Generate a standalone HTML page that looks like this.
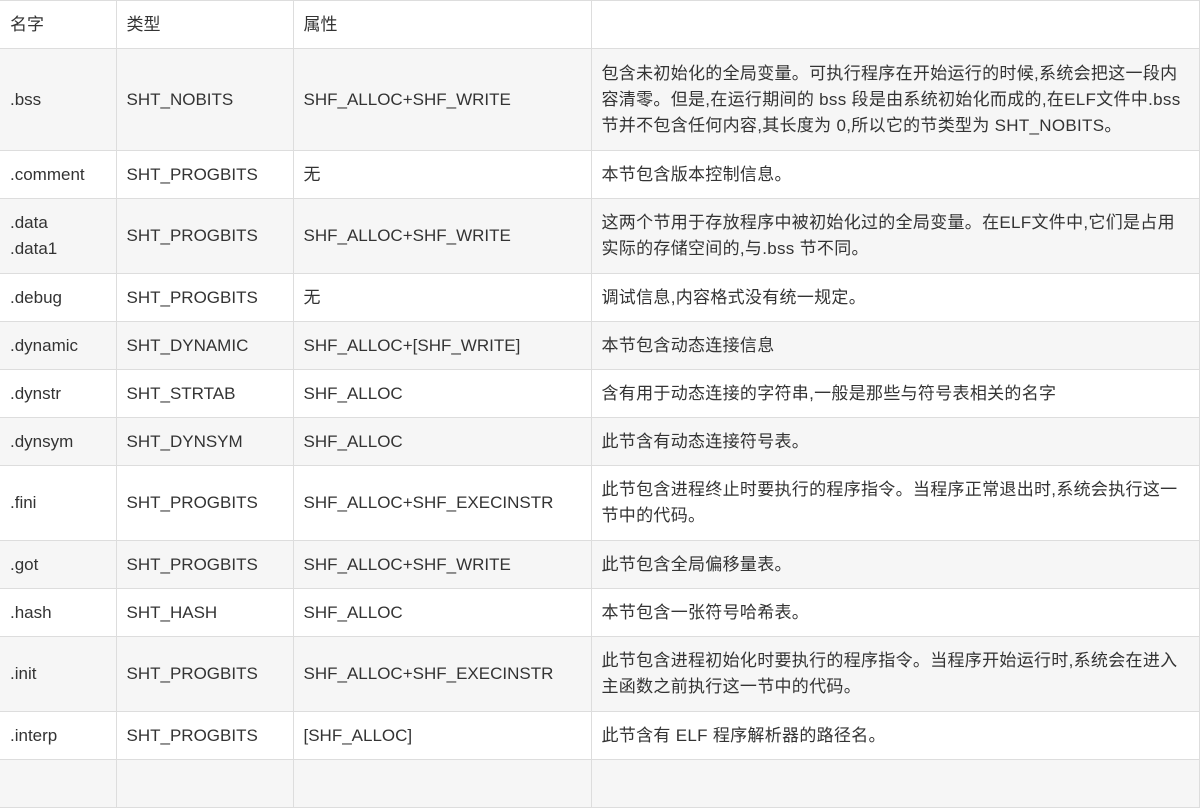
<!DOCTYPE html>
<html><head><meta charset="utf-8"><style>
html,body{margin:0;padding:0;background:#fff;width:1201px;height:763px;overflow:hidden}
table{border-collapse:collapse;table-layout:fixed;width:1199px;position:absolute;left:0;top:0;font-family:"Liberation Sans","Noto Sans CJK SC",sans-serif;font-size:17px;color:#333}
td{border:1px solid #ddd;padding:0 10px;line-height:26px;vertical-align:middle;box-sizing:border-box}
td:nth-child(4){letter-spacing:0.3px;white-space:nowrap;padding-right:0}
tr.g td{background:#f6f6f6}
td:first-child{border-left:none}
</style></head><body>
<table>
<colgroup><col style="width:116px"><col style="width:177px"><col style="width:298px"><col style="width:608px"></colgroup>
<tr style="height:48px"><td>名字</td><td>类型</td><td>属性</td><td></td></tr>
<tr class="g" style="height:102px"><td>.bss</td><td>SHT_NOBITS</td><td>SHF_ALLOC+SHF_WRITE</td><td>包含未初始化的全局变量。可执行程序在开始运行的时候,系统会把这一段内<br>容清零。但是,在运行期间的 bss 段是由系统初始化而成的,在ELF文件中.bss<br>节并不包含任何内容,其长度为 0,所以它的节类型为 SHT_NOBITS。</td></tr>
<tr style="height:48px"><td>.comment</td><td>SHT_PROGBITS</td><td>无</td><td>本节包含版本控制信息。</td></tr>
<tr class="g" style="height:75px"><td>.data<br>.data1</td><td>SHT_PROGBITS</td><td>SHF_ALLOC+SHF_WRITE</td><td>这两个节用于存放程序中被初始化过的全局变量。在ELF文件中,它们是占用<br>实际的存储空间的,与.bss 节不同。</td></tr>
<tr style="height:48px"><td>.debug</td><td>SHT_PROGBITS</td><td>无</td><td>调试信息,内容格式没有统一规定。</td></tr>
<tr class="g" style="height:48px"><td>.dynamic</td><td>SHT_DYNAMIC</td><td>SHF_ALLOC+[SHF_WRITE]</td><td>本节包含动态连接信息</td></tr>
<tr style="height:48px"><td>.dynstr</td><td>SHT_STRTAB</td><td>SHF_ALLOC</td><td>含有用于动态连接的字符串,一般是那些与符号表相关的名字</td></tr>
<tr class="g" style="height:48px"><td>.dynsym</td><td>SHT_DYNSYM</td><td>SHF_ALLOC</td><td>此节含有动态连接符号表。</td></tr>
<tr style="height:75px"><td>.fini</td><td>SHT_PROGBITS</td><td>SHF_ALLOC+SHF_EXECINSTR</td><td>此节包含进程终止时要执行的程序指令。当程序正常退出时,系统会执行这一<br>节中的代码。</td></tr>
<tr class="g" style="height:48px"><td>.got</td><td>SHT_PROGBITS</td><td>SHF_ALLOC+SHF_WRITE</td><td>此节包含全局偏移量表。</td></tr>
<tr style="height:48px"><td>.hash</td><td>SHT_HASH</td><td>SHF_ALLOC</td><td>本节包含一张符号哈希表。</td></tr>
<tr class="g" style="height:75px"><td>.init</td><td>SHT_PROGBITS</td><td>SHF_ALLOC+SHF_EXECINSTR</td><td>此节包含进程初始化时要执行的程序指令。当程序开始运行时,系统会在进入<br>主函数之前执行这一节中的代码。</td></tr>
<tr style="height:48px"><td>.interp</td><td>SHT_PROGBITS</td><td>[SHF_ALLOC]</td><td>此节含有 ELF 程序解析器的路径名。</td></tr>
<tr class="g" style="height:48px"><td>&nbsp;</td><td></td><td></td><td></td></tr>
</table>
</body></html>
